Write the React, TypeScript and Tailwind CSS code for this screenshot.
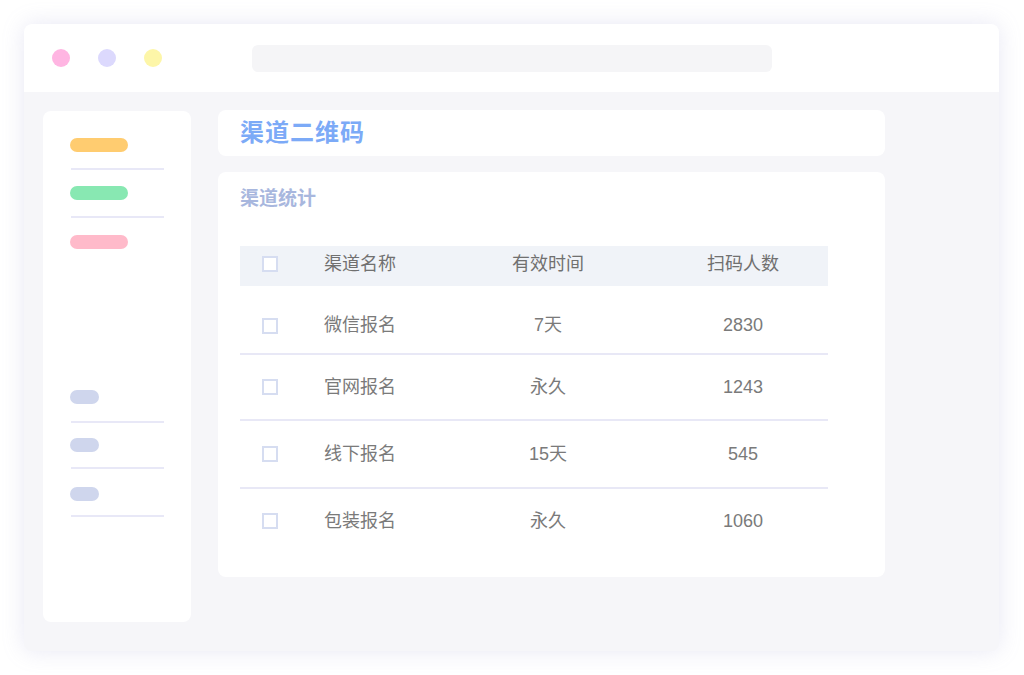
import React from 'react';

const rows = [
  { name: '微信报名', time: '7天', count: '2830', h: 'h-[69px] pt-[12px]' },
  { name: '官网报名', time: '永久', count: '1243', h: 'h-[66px]' },
  { name: '线下报名', time: '15天', count: '545', h: 'h-[68px]' },
  { name: '包装报名', time: '永久', count: '1060', h: 'h-[64px]' },
];

const Checkbox = () => (
  <span className="block w-[16px] h-[16px] border-2 border-[#d6ddf1] bg-white" />
);

const App = () => {
  return (
    <div
      className="w-[1024px] h-[675px] bg-white pt-[24px] pl-[24px]"
      style={{ fontFamily: '"Liberation Sans", "Noto Sans CJK SC", sans-serif' }}
    >
      <div className="w-[975px] h-[627px] rounded-[8px] overflow-hidden bg-[#f6f6f9] shadow-[0_0_22px_rgba(150,150,205,0.22)] flex flex-col">
        {/* top bar */}
        <div className="h-[68px] bg-white flex items-center pl-[28px] shrink-0">
          <div className="flex gap-[28px]">
            <span className="w-[18px] h-[18px] rounded-full bg-[#ffb5e2]" />
            <span className="w-[18px] h-[18px] rounded-full bg-[#dcd9fd]" />
            <span className="w-[18px] h-[18px] rounded-full bg-[#fdf6a8]" />
          </div>
          <div className="ml-[90px] w-[520px] h-[27px] rounded-[6px] bg-[#f5f5f7]" />
        </div>

        {/* body */}
        <div className="flex pl-[19px] pt-[19px] gap-[27px]">
          <div className="w-[148px] h-[511px] bg-white rounded-[8px] pl-[27px] pt-[27px]">
            <div className="flex flex-col">
              <span className="w-[58px] h-[14px] rounded-full bg-[#ffcc70]" />
              <span className="mt-[16px] ml-[1px] w-[93px] h-[2px] bg-[#e8e8f7]" />
              <span className="mt-[16px] w-[58px] h-[14px] rounded-full bg-[#88e8b2]" />
              <span className="mt-[16px] ml-[1px] w-[93px] h-[2px] bg-[#e8e8f7]" />
              <span className="mt-[17px] w-[58px] h-[14px] rounded-full bg-[#ffbaca]" />
            </div>
            <div className="flex flex-col mt-[141px]">
              <span className="w-[29px] h-[14px] rounded-full bg-[#cfd6ed]" />
              <span className="mt-[17px] ml-[1px] w-[93px] h-[2px] bg-[#e8e8f7]" />
              <span className="mt-[15px] w-[29px] h-[14px] rounded-full bg-[#cfd6ed]" />
              <span className="mt-[15px] ml-[1px] w-[93px] h-[2px] bg-[#e8e8f7]" />
              <span className="mt-[18px] w-[29px] h-[14px] rounded-full bg-[#cfd6ed]" />
              <span className="mt-[14px] ml-[1px] w-[93px] h-[2px] bg-[#e8e8f7]" />
            </div>
          </div>

          <div className="w-[667px] flex flex-col gap-[16px] -mt-[1px]">
            <div className="h-[46px] bg-white rounded-[8px] flex items-center pl-[22px]">
              <h1 className="text-[24px] font-bold text-[#7caaf7] tracking-[1px] leading-none">
                渠道二维码
              </h1>
            </div>

            <div className="h-[405px] bg-white rounded-[8px] pl-[22px] pt-[15px]">
              <h2 className="text-[19px] font-bold text-[#a8b7de] leading-[24px]">渠道统计</h2>
              <div className="mt-[35px] w-[588px] text-[#7a7a7a] text-[18px]">
                <div className="h-[40px] pb-[4px] bg-[#f0f3f8] flex items-center text-[#707070]">
                  <div className="w-[84px] pl-[22px]">
                    <Checkbox />
                  </div>
                  <div className="w-[124px] leading-none">渠道名称</div>
                  <div className="w-[200px] text-center leading-none">有效时间</div>
                  <div className="w-[180px] text-center pl-[10px] leading-none">扫码人数</div>
                </div>
                {rows.map((r, i) => (
                  <div
                    key={r.name}
                    className={`${r.h} flex items-center ${i < rows.length - 1 ? 'border-b-2 border-[#e8e8f6]' : ''}`}
                  >
                    <div className="w-[84px] pl-[22px]">
                      <Checkbox />
                    </div>
                    <div className="w-[124px]">{r.name}</div>
                    <div className="w-[200px] text-center">{r.time}</div>
                    <div className="w-[180px] text-center pl-[10px]">{r.count}</div>
                  </div>
                ))}
              </div>
            </div>
          </div>
        </div>
      </div>
    </div>
  );
};

export default App;
